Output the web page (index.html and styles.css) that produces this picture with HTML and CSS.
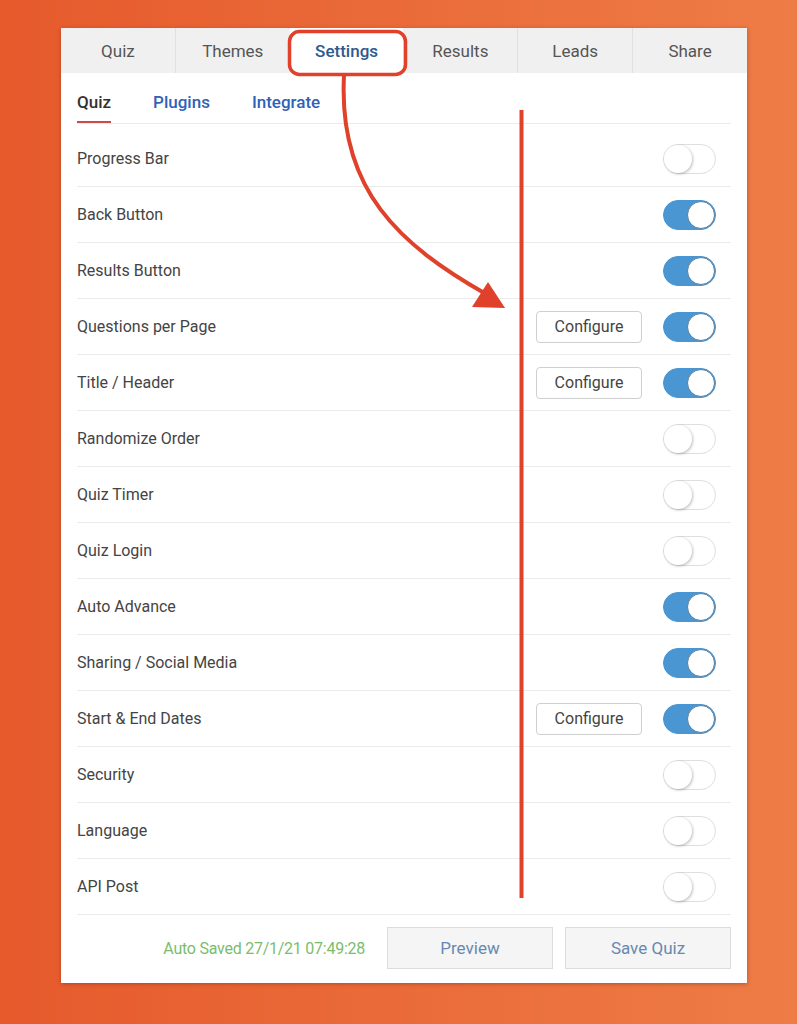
FILE: index.html
```html
<!DOCTYPE html>
<html lang="en">
<head>
    <meta charset="UTF-8">
    <meta name="viewport" content="width=device-width, initial-scale=1.0">
    <title>Quiz Settings</title>
    <link rel="stylesheet" href="styles.css">
</head>
<body>
    <div class="card">
        <div class="tabs">
            <div class="tab">Quiz</div>
            <div class="tab">Themes</div>
            <div class="tab active">Settings</div>
            <div class="tab">Results</div>
            <div class="tab">Leads</div>
            <div class="tab">Share</div>
        </div>

        <div class="content">
            <div class="subtabs">
                <span class="subtab current">Quiz</span>
                <span class="subtab">Plugins</span>
                <span class="subtab">Integrate</span>
            </div>

            <div class="rows">
                <div class="row"><span>Progress Bar</span><span class="toggle"></span></div>
                <div class="row"><span>Back Button</span><span class="toggle on"></span></div>
                <div class="row"><span>Results Button</span><span class="toggle on"></span></div>
                <div class="row"><span>Questions per Page</span><button class="configure">Configure</button><span class="toggle on"></span></div>
                <div class="row"><span>Title / Header</span><button class="configure">Configure</button><span class="toggle on"></span></div>
                <div class="row"><span>Randomize Order</span><span class="toggle"></span></div>
                <div class="row"><span>Quiz Timer</span><span class="toggle"></span></div>
                <div class="row"><span>Quiz Login</span><span class="toggle"></span></div>
                <div class="row"><span>Auto Advance</span><span class="toggle on"></span></div>
                <div class="row"><span>Sharing / Social Media</span><span class="toggle on"></span></div>
                <div class="row"><span>Start &amp; End Dates</span><button class="configure">Configure</button><span class="toggle on"></span></div>
                <div class="row"><span>Security</span><span class="toggle"></span></div>
                <div class="row"><span>Language</span><span class="toggle"></span></div>
                <div class="row"><span>API Post</span><span class="toggle"></span></div>
            </div>

            <div class="footer">
                <span class="saved">Auto Saved 27/1/21 07:49:28</span>
                <button class="action">Preview</button>
                <button class="action">Save Quiz</button>
            </div>
        </div>
    </div>

    <!-- annotation drawn over the screenshot -->
    <svg class="marks" width="797" height="1024" viewBox="0 0 797 1024">
        <rect x="289.5" y="31.5" width="116" height="43" rx="10" fill="none" stroke="#e0412a" stroke-width="3.5"/>
        <path d="M344 76 C 338 190, 400 245, 486 294" fill="none" stroke="#e0412a" stroke-width="4"/>
        <polygon points="488,282 505,308 472,307" fill="#e0412a"/>
        <rect x="519.5" y="110" width="4" height="788" fill="#e0412a"/>
    </svg>
</body>
</html>
```

FILE: styles.css
```css
body {
    margin: 0;
    height: 1024px;
    overflow: hidden;
    position: relative;
    font-family: Roboto, 'Liberation Sans', sans-serif;
    background: linear-gradient(to right, #e65a2c, #ee7c47);
}

.card {
    width: 686px;
    margin: 28px 0 0 61px;
    background: #fff;
    box-shadow: 0 1px 4px rgba(120, 40, 10, 0.45);
}

.tabs {
    display: flex;
    height: 45px;
    background: #f0f0f0;
}

.tab {
    flex: 1;
    display: flex;
    align-items: center;
    justify-content: center;
    font-size: 17px;
    color: #555;
    border-left: 1px solid #e0e0e0;
}

.tab:first-child {
    border-left: none;
}

.tab.active {
    background: #fff;
    color: #2e5a8e;
    font-weight: 500;
    border-left: none;
}

.tab.active + .tab {
    border-left: none;
}

.content {
    padding: 0 16px 14px;
}

.subtabs {
    display: flex;
    gap: 42px;
    height: 50px;
    align-items: flex-end;
    border-bottom: 1px solid #ebebeb;
}

.subtab {
    font-size: 17px;
    font-weight: 500;
    color: #2f62b8;
    padding-bottom: 11px;
}

.subtab.current {
    color: #333;
    border-bottom: 2px solid #cc4a4c;
    padding-bottom: 9px;
}

.rows {
    padding-top: 7px;
}

.row {
    display: flex;
    align-items: center;
    height: 55px;
    border-bottom: 1px solid #ebebeb;
    font-size: 16px;
    color: #444;
}

.row > span:first-child {
    flex: 1;
}

.configure {
    width: 106px;
    height: 32px;
    margin-right: 21px;
    background: #fff;
    border: 1px solid #cfcfcf;
    border-radius: 4px;
    font-family: inherit;
    font-size: 16px;
    color: #444;
}

.toggle {
    position: relative;
    width: 53px;
    height: 30px;
    margin-right: 15px;
    box-sizing: border-box;
    border: 1px solid #dedede;
    border-radius: 15px;
    background: #fff;
}

.toggle::after {
    content: '';
    position: absolute;
    top: 0;
    left: 0;
    width: 28px;
    height: 28px;
    border-radius: 50%;
    background: #fff;
    box-shadow: 1px 1px 3px rgba(0, 0, 0, 0.25);
}

.toggle.on {
    background: #4a96d2;
    border-color: #4a96d2;
}

.toggle.on::after {
    left: auto;
    right: 0;
    box-shadow: none;
    border: 1px solid #5a7e98;
    box-sizing: border-box;
}

.footer {
    display: flex;
    align-items: center;
    justify-content: flex-end;
    padding-top: 12px;
}

.saved {
    font-size: 16px;
    letter-spacing: -0.25px;
    color: #7bbd6c;
    margin-right: 10px;
}

.action {
    width: 166px;
    height: 42px;
    margin-left: 12px;
    background: #f5f5f5;
    border: 1px solid #dcdcdc;
    font-family: inherit;
    font-size: 17px;
    color: #6789b0;
}

.marks {
    position: absolute;
    top: 0;
    left: 0;
    pointer-events: none;
}
```
